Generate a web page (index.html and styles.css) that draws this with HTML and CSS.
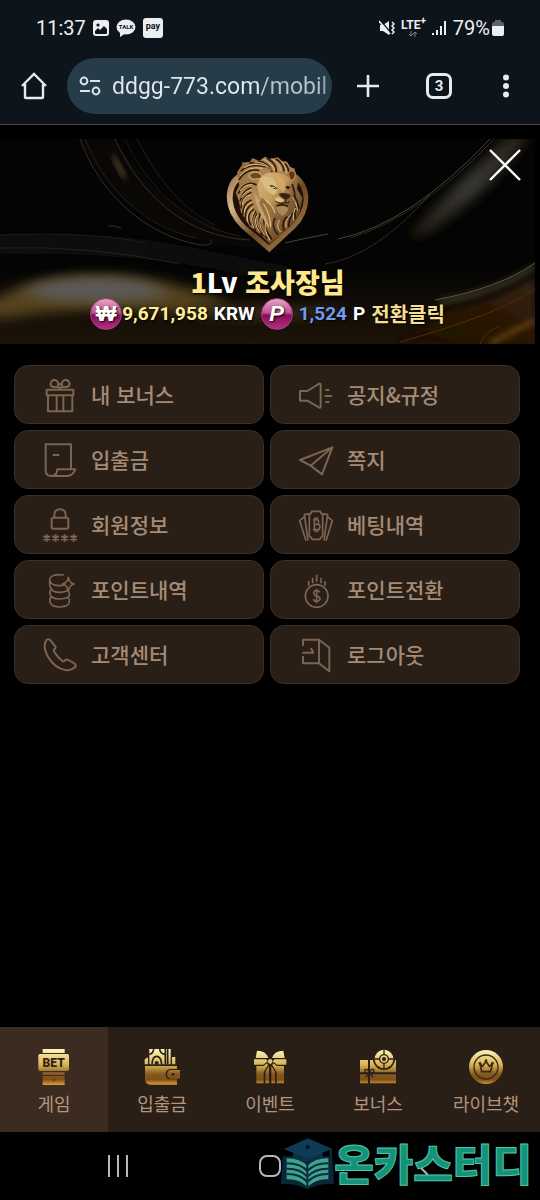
FILE: index.html
```html
<!DOCTYPE html>
<html lang="ko">
<head>
    <meta charset="UTF-8">
    <meta name="viewport" content="width=device-width, initial-scale=1.0">
    <title>ddgg-773.com</title>
    <link rel="stylesheet" href="styles.css">
</head>
<body>
    <header class="browser">
        <div class="status">
            <div class="status-group">
                <span class="clock">11:37</span>
                <svg class="status-icon" viewBox="0 0 16 16"><rect width="16" height="16" rx="3" fill="#eceff1"/><circle cx="5" cy="5" r="1.6" fill="#0d141b"/><path d="M2 13V11L5 8L7 10L11 6L14 9V13Q14 14 13 14H3Q2 14 2 13Z" fill="#0d141b"/></svg>
                <svg class="talk-icon" viewBox="0 0 20 18"><ellipse cx="10" cy="8" rx="9.5" ry="7.5" fill="#eceff1"/><path d="M4 12L4 18L10 14Z" fill="#eceff1"/><text x="10" y="10" class="talk-text">TALK</text></svg>
                <span class="pay">pay</span>
            </div>
            <div class="status-group status-right">
                <svg class="status-icon" viewBox="0 0 16 16"><path d="M1 5H4L10 1V15L4 11H1Z" fill="#eceff1"/><path d="M1 0L12 13" stroke="#0d141b" stroke-width="1.5"/><path d="M0 1L11 14" stroke="#eceff1" stroke-width="1.6"/><path d="M13 2L15 4L13 6L15 8L13 10L15 12L13 14" fill="none" stroke="#eceff1" stroke-width="1.5"/></svg>
                <span class="lte"><span>LTE<sup>+</sup></span><svg viewBox="0 0 10 6"><path d="M3 0V5M1 3L3 5L5 3M7 6V1M5 3L7 1L9 3" fill="none" stroke="#7d858b"/></svg></span>
                <svg class="signal-icon" viewBox="0 0 15 16"><path d="M1 13V15M5 10V15M9 6V15M13 1V15" stroke="#eceff1" stroke-width="2"/></svg>
                <span class="battery-text">79%</span>
                <svg class="battery-icon" viewBox="0 0 12 16"><path d="M3 0H9V2H10Q12 2 12 4V6H0V4Q0 2 2 2H3Z" fill="#5d6469"/><path d="M0 6H12V14Q12 16 10 16H2Q0 16 0 14Z" fill="#eceff1"/></svg>
            </div>
        </div>
        <div class="toolbar">
            <button class="tool home" aria-label="홈"><svg viewBox="0 0 28 28"><path d="M2 14L14 2L26 14M5 12V25Q5 26 6 26H22Q23 26 23 25V12" fill="none" stroke="#e6ebee" stroke-width="2.400"/></svg></button>
            <label class="address">
                <svg viewBox="0 0 24 20"><g fill="none" stroke="#dce5ea" stroke-width="2"><circle cx="6" cy="5" r="3.400"/><circle cx="18" cy="15" r="3.400"/><path d="M12 5H22M2 15H12"/></g></svg>
                <input type="text" aria-label="주소" value="ddgg-773.com/mobil">
            </label>
            <button class="tool plus" aria-label="새 탭"><svg viewBox="0 0 28 28"><path d="M14 3V25M3 14H25" stroke="#e6ebee" stroke-width="2.600"/></svg></button>
            <button class="tool tabs" aria-label="탭"><span>3</span></button>
            <button class="tool more" aria-label="메뉴"><svg viewBox="0 0 28 28" fill="#e6ebee"><circle cx="14" cy="5.500" r="3"/><circle cx="14" cy="14" r="3"/><circle cx="14" cy="22.500" r="3"/></svg></button>
        </div>
    </header>

    <main>
        <section class="banner">
            <svg class="banner-bg" viewBox="0 0 535 205" preserveAspectRatio="none">
                <defs>
                    <filter id="soft" x="-50%" y="-50%" width="200%" height="200%"><feGaussianBlur stdDeviation="8"/></filter>
                    <filter id="mid" x="-50%" y="-80%" width="200%" height="260%"><feGaussianBlur stdDeviation="6"/></filter>
                    <filter id="fine" x="-50%" y="-50%" width="200%" height="200%"><feGaussianBlur stdDeviation="3"/></filter>
                    <linearGradient id="floor" x1="0" y1="0" x2="0" y2="1"><stop offset="0" stop-color="#1e1508" stop-opacity="0"/><stop offset="1" stop-color="#1e1408"/></linearGradient>
                    <linearGradient id="beam" x1="1" y1="0" x2="0" y2="1"><stop offset="0" stop-color="#2b2013"/><stop offset=".5" stop-color="#383836"/><stop offset="1" stop-color="#2a2013"/></linearGradient>
                    <linearGradient id="gold" x1="0" y1="1" x2="1" y2="0"><stop offset="0" stop-color="#1a0e03"/><stop offset=".6" stop-color="#2c1806"/><stop offset="1" stop-color="#38250e"/></linearGradient>
                </defs>
                <rect width="535" height="205" fill="#040404"/>
                <rect y="130" width="535" height="75" fill="url(#floor)"/>
                <path d="M0 95Q110 92 190 108T300 130L260 140Q150 112 0 115Z" fill="#0f0c0b" filter="url(#fine)"/>
                <path d="M80 0Q110 75 210 105L300 112Q170 90 115 0Z" fill="#0a0807"/>
                <path d="M-20 170Q20 138 90 136T230 165L190 174Q80 165 0 180Z" fill="#54431f" filter="url(#mid)"/>
                <path d="M20 153Q50 138 100 139T170 156Q130 162 90 162T20 153Z" fill="#5b5a58" filter="url(#mid)"/>
                <path d="M180 165Q270 170 350 169L330 175Q280 182 200 177Z" fill="#3a2f1a" filter="url(#mid)"/>
                <g fill="none" stroke="#3a2d20">
                    <path d="M80 0C100 55 145 96 200 106Q214 107 211 101"/>
                    <path d="M85 0C105 48 140 86 196 99" opacity=".6"/>
                    <path d="M115 0C140 55 185 98 250 101"/>
                    <path d="M125 0C148 50 190 88 240 97" opacity=".5"/>
                    <path d="M137 0C160 45 185 72 215 86" opacity=".6"/>
                    <path d="M0 96Q90 92 145 104" opacity=".4"/>
                    <path d="M0 109Q90 106 180 125" opacity=".6"/>
                    <path d="M108 87Q114 86 121 89"/>
                </g>
                <ellipse cx="119" cy="28" rx="14" ry="2" transform="rotate(62 119 28)" fill="#665233" filter="url(#fine)"/>
                <path d="M510 -5H530Q495 50 424 96L410 98Q430 70 510 -5Z" fill="url(#beam)" filter="url(#mid)"/>
                <g fill="none" stroke="#4e432f">
                    <path d="M490 0Q410 85 338 100"/>
                    <path d="M494 0Q420 78 350 99" opacity=".6"/>
                    <path d="M430 55Q375 118 325 125" opacity=".6"/>
                    <path d="M285 104Q305 99 328 95"/>
                </g>
                <path d="M535 138Q500 160 450 172L395 205H535Z" fill="url(#gold)" filter="url(#fine)"/>
                <path d="M535 128Q495 154 440 163" fill="none" stroke="#504632" stroke-width="4" filter="url(#fine)"/>
                <path d="M535 124Q500 149 435 161" fill="none" stroke="#5d533c"/>
                <path d="M535 150Q500 175 400 203M500 187Q485 192 480 205" fill="none" stroke="#4d2e0b"/>
                <path d="M535 182Q510 193 490 205" fill="none" stroke="#7a4e12" stroke-width="4" filter="url(#fine)"/>
            </svg>
            <button class="close" aria-label="닫기"><svg viewBox="0 0 32 32"><path d="M1 1L31 31M31 1L1 31" stroke="#fff" stroke-width="2.400"/></svg></button>
            <svg class="lion" viewBox="0 0 315 345">
                <defs>
                    <linearGradient id="rim" x1="0" y1="0" x2="1" y2="1"><stop offset="0" stop-color="#8f6b42"/><stop offset=".25" stop-color="#d8b889"/><stop offset=".55" stop-color="#6d4824"/><stop offset="1" stop-color="#b58b56"/></linearGradient>
                    <linearGradient id="fur" x1="0" y1="0" x2="1" y2="1"><stop offset="0" stop-color="#8d683b"/><stop offset=".4" stop-color="#b18a55"/><stop offset="1" stop-color="#4c2e15"/></linearGradient>
                    <linearGradient id="face" x1="0" y1="0" x2="1" y2="1"><stop offset="0" stop-color="#d9b77b"/><stop offset=".5" stop-color="#c49a5c"/><stop offset="1" stop-color="#5d3b1d"/></linearGradient>
                </defs>
                <path d="M80 82Q38 98 35 155Q36 207 78 248L163 322L240 250Q280 210 280 158Q278 108 235 82Z" fill="url(#rim)"/>
                <path d="M77 105Q51 126 53 164Q56 205 92 242L162 300L228 242Q265 202 266 162Q264 120 235 98Z" fill="#201208"/>
                <path d="M66 82L83 57L78 53L105 50L112 39L133 47L150 35L166 43L188 37L202 49L216 50L226 66L239 71L242 91L249 109L246 132L262 158L254 203L232 240L206 263L188 276L164 296L137 269L104 244L78 202L72 168L62 143L73 120Z" fill="url(#fur)"/>
                <g fill="none" stroke="#311a0c" stroke-width="5" stroke-linecap="round">
                    <path d="M73 103Q94 70 130 76M79 77Q106 54 151 65M104 54Q147 47 165 72M130 48Q162 54 171 80M158 41Q185 56 184 80M184 43Q205 56 207 77M211 57Q225 75 221 91"/>
                    <path d="M70 145Q92 105 123 119M76 166Q87 135 107 129M78 189Q80 154 107 143M83 210Q83 176 108 166M91 225Q88 190 113 178M107 240Q91 209 116 193M122 257Q101 223 122 200M143 272Q112 237 125 207M155 280Q126 240 135 205M170 282Q140 243 148 207M188 268Q166 240 180 220M207 256Q198 230 216 216M221 244Q223 216 236 203M240 220Q239 194 246 181M252 190Q247 164 237 153M232 119Q243 148 239 169"/>
                </g>
                <g fill="none" stroke="#dfbd82" stroke-width="3" stroke-linecap="round">
                    <path d="M76 92Q99 61 142 70M88 68Q113 50 157 64M119 51Q154 51 169 76M146 43Q172 54 178 76M170 41Q198 57 196 78M200 52Q216 64 214 84"/>
                    <path d="M76 137Q89 117 111 119M80 157Q90 137 108 134M82 179Q83 154 106 149M88 203Q88 181 108 172M98 229Q92 204 112 189M116 248Q103 220 118 201M134 262Q111 229 128 209M149 271Q122 231 142 211M164 285Q141 250 155 220M196 260Q181 244 193 226M213 247Q209 226 226 211M235 225Q232 205 241 190M247 195Q244 169 233 157"/>
                </g>
                <path d="M101 93Q112 75 132 83Q147 92 137 101L113 103Z" fill="#6d4826" stroke="#c39a61" stroke-width="5"/>
                <path d="M219 86Q231 69 241 84Q242 103 228 108Z" fill="#5b361a" stroke="#b9894f" stroke-width="4"/>
                <path d="M136 98Q156 77 188 84Q219 86 230 112L223 127L227 151L221 179L210 190L202 213L184 205L170 182L150 176L132 153L127 120Z" fill="url(#face)"/>
                <path d="M136 102Q158 86 178 104L190 133L178 151Q150 142 136 102Z" fill="#d9bd83"/>
                <path d="M188 92Q207 97 211 116L207 144L194 132L182 104Z" fill="#cfa867"/>
                <path d="M163 121Q177 118 189 133L177 132Z" fill="#321c0e"/>
                <path d="M211 125Q219 120 226 126L219 134Z" fill="#321c0e"/>
                <path d="M171 127Q177 125 182 130" stroke="#ffe8af" stroke-width="3" fill="none"/>
                <path d="M191 147Q207 140 226 149Q225 161 213 164Q199 160 191 147Z" fill="#382013"/>
                <path d="M212 162L211 172Q197 179 181 168M211 172Q219 177 224 168" fill="none" stroke="#412611" stroke-width="4"/>
                <path d="M180 158Q198 153 208 169Q196 175 181 167Z" fill="#e0bc80"/>
                <path d="M184 184Q203 178 220 188Q218 206 201 213Q187 204 184 184Z" fill="#a9865c"/>
                <path d="M184 183Q202 176 219 184" stroke="#2d190c" stroke-width="5" fill="none"/>
                <path d="M114 119Q119 157 145 175Q157 194 163 252Q137 214 123 173Z" fill="#c3a272"/>
                <path d="M142 158Q160 177 169 188Q178 218 168 258Q154 215 132 174Z" fill="#95703e"/>
                <path d="M152 164Q171 178 180 205M145 176Q165 205 167 245" fill="none" stroke="#efcf91" stroke-width="3"/>
            </svg>
            <h1 class="user"><span class="accent">1</span>Lv <span class="accent">조사장님</span></h1>
            <div class="balance">
                <span class="coin">₩</span>
                <span class="money">9,671,958</span>
                <span class="unit">KRW</span>
                <span class="coin coin-p">P</span>
                <span class="point">1,524</span>
                <span class="unit">P</span>
                <button class="convert">전환클릭</button>
            </div>
        </section>

        <nav class="menu" aria-label="마이 메뉴">
            <a class="menu-item" href="#">
                <svg class="menu-icon" viewBox="0 0 108 108"><rect x="14" y="38" width="80" height="17"/><path d="M18 55V103H91V55M44 55V103M64 55V103"/><path d="M50 30H35Q26 29 26 20Q28 8 39 9Q49 12 50 25M58 30H72Q83 29 83 20Q80 8 69 9Q59 12 58 25"/><circle cx="54" cy="27" r="6"/></svg>
                <span>내 보너스</span>
            </a>
            <a class="menu-item" href="#">
                <svg class="menu-icon" viewBox="0 0 108 108"><path d="M6 42H28L64 20Q68 19 68 24V88Q68 93 64 92L28 71H6ZM80 57H102M82 39H94M82 75H94"/></svg>
                <span>공지&amp;규정</span>
            </a>
            <a class="menu-item" href="#">
                <svg class="menu-icon" viewBox="0 0 108 108"><path d="M87 80V7H11V87Q12 102 28 102H78Q95 99 100 82H46Q46 101 28 102M32 39H52"/></svg>
                <span>입출금</span>
            </a>
            <a class="menu-item" href="#">
                <svg class="menu-icon" viewBox="0 0 108 108"><path d="M6 54L103 16L72 97L38 71ZM38 71L103 16"/></svg>
                <span>쪽지</span>
            </a>
            <a class="menu-item" href="#">
                <svg class="menu-icon" viewBox="0 0 108 108"><rect x="29" y="32" width="50" height="33" rx="5"/><path d="M37 31V23Q38 7 54 7T71 23V31"/><path d="M14 82V104M4 87L24 99M24 87L4 99M41 82V104M31 87L51 99M51 87L31 99M68 82V104M58 87L78 99M78 87L58 99M95 82V104M85 87L105 99M105 87L85 99"/></svg>
                <span>회원정보</span>
            </a>
            <a class="menu-item" href="#">
                <svg class="menu-icon thin" viewBox="0 0 108 108"><path d="M34 22Q41 20 41 13H67Q67 20 74 22V87Q67 90 66 97H42Q41 90 34 87Z"/><path d="M34 20L19 23L30 101M19 30L5 41L24 101M74 20L89 23L78 101M89 30L103 41L84 101"/><path d="M45 38H57Q65 40 60 51Q70 54 63 68H45M49 38V68M49 52H61M52 31V38M58 31V38M52 68V76M58 68V76"/></svg>
                <span>베팅내역</span>
            </a>
            <a class="menu-item" href="#">
                <svg class="menu-icon thin" viewBox="0 0 108 108"><path d="M66 9Q24 4 23 25Q26 41 54 41Q64 41 70 37M23 25V37Q25 62 54 61Q68 61 79 54M28 52Q22 57 24 67Q29 82 54 81Q82 79 82 68Q82 60 78 55M28 75Q22 79 24 91Q29 105 54 105Q82 103 82 91Q83 80 78 76"/><path d="M79 16Q82 33 96 36Q82 39 79 57Q76 39 61 36Q76 33 79 16Z"/></svg>
                <span>포인트내역</span>
            </a>
            <a class="menu-item" href="#">
                <svg class="menu-icon thin" viewBox="0 0 108 108"><circle cx="56" cy="72" r="34"/><path d="M32 27V41M44 17V34M56 8V29M69 17V34M81 27V41M66 61Q63 56 56 56Q46 57 47 64Q48 70 56 72Q66 73 66 81Q65 88 56 88Q48 88 46 82M56 50V94"/></svg>
                <span>포인트전환</span>
            </a>
            <a class="menu-item" href="#">
                <svg class="menu-icon" viewBox="0 0 108 108"><path d="M13 9Q20 4 26 11L40 28Q42 32 38 36Q34 40 37 45Q47 61 61 72Q65 75 69 70Q74 66 79 69L98 80Q104 85 99 91Q87 102 70 99Q38 93 18 59Q1 29 13 9Z"/></svg>
                <span>고객센터</span>
            </a>
            <a class="menu-item" href="#">
                <svg class="menu-icon" viewBox="0 0 108 108"><path d="M15 26V8H63L94 32V103L63 79H15V57M63 8V79M13 47H46L39 33"/></svg>
                <span>로그아웃</span>
            </a>
        </nav>
    </main>

    <nav class="tabbar" aria-label="하단 메뉴">
        <a class="tab active" href="#">
            <svg viewBox="0 0 108 108">
                <defs><linearGradient id="brass" gradientUnits="userSpaceOnUse" x1="0" y1="0" x2="0" y2="108"><stop offset="0" stop-color="#fff7bb"/><stop offset=".45" stop-color="#d5b053"/><stop offset=".7" stop-color="#845820"/><stop offset=".85" stop-color="#805018"/><stop offset="1" stop-color="#dea23c"/></linearGradient></defs>
                <g fill="url(#brass)"><path d="M20 0H86V12H20ZM12 15H94Q99 15 99 20V61Q99 66 94 66H12Q7 66 7 61V20Q7 15 12 15ZM20 70H86V78H20ZM20 81H86V108H20Z"/></g><path d="M50 93H57" stroke="#4c3013" stroke-width="4"/><text class="bet" x="53" y="53">BET</text>
            </svg>
            <span>게임</span>
        </a>
        <a class="tab" href="#">
            <svg viewBox="0 0 108 108"><g fill="url(#brass)"><path d="M16 0H80V46H16ZM84 24H94V46H84ZM2 31L12 25V46H2ZM3 51H99V60H79Q65 61 65 76T79 91H99V107H20Q3 107 3 90ZM108 63V89H80Q69 87 69 76T80 63Z"/></g><path d="M29 0Q28 14 16 16M47 0Q49 15 62 16M24 46Q25 22 38 22T53 46M64 0V46M71 0V46" fill="none" stroke="#2a1f17" stroke-width="5"/><circle cx="38" cy="42" r="6" fill="#2a1f17"/><circle cx="87" cy="76" r="4" fill="#2a1f17"/></svg>
            <span>입출금</span>
        </a>
        <a class="tab" href="#">
            <svg viewBox="0 0 108 108"><g fill="url(#brass)"><path d="M15 5Q42 5 49 27H11ZM94 5Q67 5 60 27H98ZM6 31H42L47 37L34 47H6ZM103 31H67L62 37L75 47H103ZM50 31H59L62 40L55 46L47 40ZM13 51H34L45 43L48 48L35 70V103H13ZM96 51H75L64 43L61 48L74 70V103H96ZM40 68L51 51V103H40ZM69 68L58 51V103H69Z"/></g></svg>
            <span>이벤트</span>
        </a>
        <a class="tab" href="#">
            <svg viewBox="0 0 108 108"><g fill="url(#brass)"><path d="M0 33H24V70H0ZM30 33H108V70H30ZM0 76H24V103H0ZM30 76H108V103H30Z"/></g><circle cx="72" cy="30" r="33" fill="#2a1f17"/><circle cx="72" cy="30" r="28" fill="url(#brass)"/><g fill="none" stroke="#2a1f17" stroke-width="4"><circle cx="72" cy="30" r="13"/><path d="M72 2V17M72 43V58M44 30H59M85 30H100M28 72Q12 76 15 62Q23 58 28 72Q33 58 41 62Q44 76 28 72L17 85M28 72L40 85"/></g><circle cx="72" cy="30" r="6" fill="#2a1f17"/></svg>
            <span>보너스</span>
        </a>
        <a class="tab" href="#">
            <svg viewBox="0 0 108 108"><circle cx="54" cy="54" r="51" fill="url(#brass)"/><circle cx="54" cy="54" r="36" fill="url(#brass)" stroke="#3a2813" stroke-width="4"/><path d="M36 45L44 52L54 37L64 52L73 45L68 68H41Z" fill="none" stroke="#3a2813" stroke-width="5"/><g fill="#3a2813"><circle cx="36" cy="43" r="4"/><circle cx="54" cy="35" r="4"/><circle cx="73" cy="43" r="4"/></g></svg>
            <span>라이브챗</span>
        </a>
    </nav>

    <footer class="system">
        <button aria-label="최근 앱"><svg viewBox="0 0 24 24"><path d="M3 1V23M12 1V23M21 1V23" stroke="#b8b8b8" stroke-width="2"/></svg></button>
        <button aria-label="홈 화면"><svg viewBox="0 0 24 24"><rect x="2" y="2" width="20" height="20" rx="7" fill="none" stroke="#b8b8b8" stroke-width="2"/></svg></button>
        <button aria-label="뒤로"><svg viewBox="0 0 24 24"><path d="M18 3L9 12L18 21" fill="none" stroke="#b8b8b8" stroke-width="2"/></svg></button>
        <div class="watermark">
            <svg viewBox="0 0 159 156">
                <path d="M5 55Q2 100 0 139Q37 133 79 154Q121 133 159 139L154 55Z" fill="#0a2638"/>
                <path d="M36 42V62Q79 80 125 62V42Z" fill="#0b3148"/>
                <path d="M9 33L81 1L153 32L81 63Z" fill="#0e3b56"/><circle cx="80" cy="27" r="7" fill="#061b29"/>
                <path d="M149 32V55" stroke="#0e3b56" stroke-width="5"/>
                <path d="M17 61Q58 61 79 84Q102 60 142 61V124Q109 120 79 146Q53 122 17 124Z" fill="#3fa28c"/>
                <path d="M17 76Q58 76 79 99Q102 75 142 76M17 92Q58 91 79 116Q102 91 142 92M17 108Q57 107 79 132Q102 107 142 108M79 81V146" fill="none" stroke="#0a2d3b" stroke-width="6"/>
            </svg>
            <span>온카스터디</span>
        </div>
    </footer>
</body>
</html>
```

FILE: styles.css
```css
* {
    box-sizing: border-box;
}
body {
    margin: 0;
    min-height: 100vh;
    display: flex;
    flex-direction: column;
    background-color: #000;
    color: #fff;
    font-family: Roboto, "Noto Sans CJK KR", sans-serif;
}
button {
    padding: 0;
    border: none;
    background: none;
    color: inherit;
    font: inherit;
    cursor: pointer;
}
a {
    color: inherit;
    text-decoration: none;
}
svg {
    display: block;
    flex: none;
}

/* browser */
.browser {
    background-color: #0d141b;
    border-bottom: 1px solid #45494c;
}
.status {
    display: flex;
    justify-content: space-between;
    align-items: center;
    height: 56px;
    padding: 0 36px;
}
.status-group {
    display: flex;
    align-items: center;
    gap: 7px;
    color: #eceff1;
    font-size: 20px;
}
.status-right {
    gap: 6px;
}
.status-icon {
    width: 16px;
    height: 16px;
}
.talk-icon {
    width: 20px;
    height: 18px;
}
.talk-text {
    fill: #0d141b;
    font-size: 6px;
    font-weight: bold;
    text-anchor: middle;
}
.pay {
    width: 20px;
    height: 20px;
    border-radius: 3px;
    background-color: #eceff1;
    color: #0d141b;
    font-size: 9px;
    font-weight: bold;
    line-height: 17px;
    text-align: center;
}
.lte {
    display: flex;
    flex-direction: column;
    align-items: center;
    font-size: 12px;
    font-weight: bold;
    line-height: 11px;
}
.lte sup {
    font-size: 10px;
    line-height: 0;
}
.lte svg {
    width: 10px;
    height: 6px;
}
.signal-icon {
    width: 15px;
    height: 16px;
}
.battery-text {
    margin-right: -4px;
}
.battery-icon {
    width: 12px;
    height: 16px;
}
.toolbar {
    display: flex;
    align-items: center;
    gap: 22px;
    height: 68px;
    padding: 0 20px 8px;
}
.tool {
    flex: none;
    display: grid;
    place-items: center;
    width: 28px;
    height: 28px;
}
.tool svg {
    width: 28px;
    height: 28px;
}
.home {
    margin-right: -3px;
}
.tabs {
    margin: 0 17px 0 21px;
}
.tabs span {
    width: 26px;
    height: 26px;
    border: 3px solid #e6ebee;
    border-radius: 7px;
    color: #e6ebee;
    font-size: 15px;
    font-weight: bold;
    line-height: 20px;
}
.address {
    flex: 1;
    min-width: 0;
    display: flex;
    align-items: center;
    gap: 10px;
    height: 56px;
    padding: 0 4px 0 11px;
    border-radius: 28px;
    background-color: #263c49;
}
.address svg {
    width: 24px;
    height: 20px;
}
.address input {
    flex: 1;
    min-width: 0;
    padding: 0;
    border: none;
    outline: none;
    background: linear-gradient(90deg, #e1e9ee 68%, #b5c3cc 69%, #b5c3cc 95%, #7d909b);
    -webkit-background-clip: text;
    background-clip: text;
    color: transparent;
    font-family: Roboto, sans-serif;
    font-size: 23px;
}

/* banner */
.banner {
    position: relative;
    display: flex;
    flex-direction: column;
    align-items: center;
    margin: 14px 5px 0 0;
    padding: 6px 0 14px;
}
.banner-bg {
    position: absolute;
    inset: 0;
    width: 100%;
    height: 100%;
}
.close {
    position: absolute;
    top: 10px;
    right: 14px;
}
.close svg {
    width: 32px;
    height: 32px;
}
.lion {
    position: relative;
    width: 105px;
    height: 115px;
}
.user {
    position: relative;
    margin: 6px 0 0;
    font-family: "Noto Sans CJK KR", sans-serif;
    font-size: 27px;
    font-weight: 900;
    line-height: 32px;
    text-shadow: 1px 1px 2px #000;
}
.accent {
    color: #ffe88c;
}
.balance {
    position: relative;
    display: flex;
    align-items: center;
    gap: 6px;
    height: 32px;
    font-size: 19px;
    font-weight: bold;
    line-height: 30px;
    text-shadow: 1px 1px 2px #000;
}
.coin {
    width: 32px;
    height: 32px;
    margin-right: -6px;
    border: 1px solid #a73d7c;
    border-radius: 50%;
    background: linear-gradient(#e6a6c5, #c05491 45%, #8b0b59 55%, #b3327f);
    font-family: "Liberation Sans", sans-serif;
    font-size: 22px;
    font-weight: bold;
    text-align: center;
}
.coin-p {
    margin-right: 0;
    font-style: italic;
}
.money {
    color: #ffef9c;
}
.point {
    color: #6f9af0;
}
.convert {
    color: #f5df91;
    font-family: "Noto Sans CJK KR", sans-serif;
    font-size: 20px;
    font-weight: 700;
    text-shadow: inherit;
}

/* menu */
.menu {
    display: grid;
    grid-template-columns: 1fr 1fr;
    gap: 6px;
    padding: 21px 20px 21px 14px;
}
.menu-item {
    display: flex;
    align-items: center;
    gap: 13px;
    height: 59px;
    padding: 0 27px;
    border: 1px solid #3b3028;
    border-radius: 14px;
    background-color: #2a1f17;
    color: #a58b75;
    font-family: "Noto Sans CJK KR", sans-serif;
    font-size: 21px;
    font-weight: 500;
    line-height: 30px;
}
.menu-item span {
    padding-bottom: 2px;
}
.menu-icon {
    width: 36px;
    height: 36px;
    fill: none;
    stroke: #7b6450;
    stroke-width: 6;
    stroke-linejoin: round;
}
.thin {
    stroke-width: 5;
}

/* bottom tabs */
.tabbar {
    display: grid;
    grid-template-columns: repeat(5, 1fr);
    margin-top: auto;
    background-color: #2a1f17;
}
.tab {
    display: flex;
    flex-direction: column;
    align-items: center;
    gap: 4px;
    height: 105px;
    padding-top: 22px;
    color: #b3957e;
    font-family: "Noto Sans CJK KR", sans-serif;
    font-size: 18px;
    font-weight: 400;
    line-height: 28px;
}
.tab.active {
    background-color: #3c2b20;
}
.tab svg {
    width: 36px;
    height: 36px;
}
.bet {
    fill: #35230f;
    font-family: Roboto, sans-serif;
    font-size: 36px;
    font-weight: 900;
    text-anchor: middle;
}

.system {
    position: relative;
    display: grid;
    grid-template-columns: repeat(3, 1fr);
    place-items: center;
    height: 68px;
    padding: 0 42px;
}
.system button svg {
    width: 24px;
    height: 24px;
}
.watermark {
    position: absolute;
    right: 8px;
    bottom: 10px;
    display: flex;
    align-items: center;
    color: #17917a;
    font-family: "Noto Sans CJK KR", sans-serif;
    font-size: 43px;
    font-weight: 900;
    line-height: 48px;
    -webkit-text-stroke: 1px #49c9aa;
}
.watermark span {
    padding-bottom: 4px;
}
.watermark svg {
    width: 53px;
    height: 52px;
}
```
